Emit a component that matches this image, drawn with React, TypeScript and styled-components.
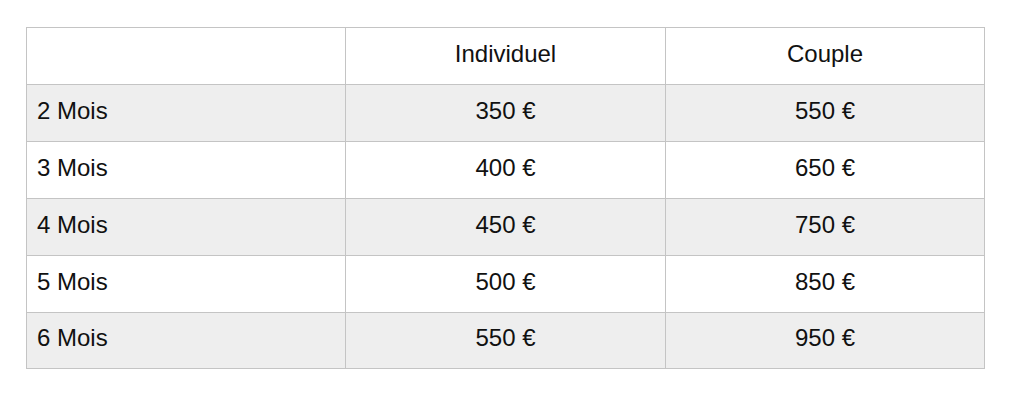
import React from 'react';
import styled, { createGlobalStyle } from 'styled-components';

const GlobalStyle = createGlobalStyle`
  html, body {
    margin: 0;
    padding: 0;
    background: #ffffff;
  }
  body {
    font-family: "Liberation Sans", Arial, Helvetica, sans-serif;
  }
`;

const Page = styled.div`
  padding: 27px 26px;
`;

const Table = styled.div`
  display: grid;
  grid-template-columns: 319px 320px 319px;
  grid-template-rows: repeat(5, 57px) 56px;
  width: 959px;
  border-top: 1px solid #c4c4c4;
  border-left: 1px solid #c4c4c4;
  box-sizing: border-box;
`;

const Row = styled.div<{ $shaded?: boolean }>`
  display: contents;

  & > div {
    background: ${({ $shaded }) => ($shaded ? '#eeeeee' : '#ffffff')};
  }
`;

const Cell = styled.div<{ $align?: 'left' | 'center' }>`
  box-sizing: border-box;
  display: flex;
  align-items: center;
  justify-content: ${({ $align }) => ($align === 'left' ? 'flex-start' : 'center')};
  padding: 0 10px 5px;
  border-right: 1px solid #c4c4c4;
  border-bottom: 1px solid #c4c4c4;
  font-size: 24px;
  color: #111111;
`;

const rows = [
  { label: '2 Mois', single: '350 €', couple: '550 €' },
  { label: '3 Mois', single: '400 €', couple: '650 €' },
  { label: '4 Mois', single: '450 €', couple: '750 €' },
  { label: '5 Mois', single: '500 €', couple: '850 €' },
  { label: '6 Mois', single: '550 €', couple: '950 €' },
];

export default function App() {
  return (
    <>
      <GlobalStyle />
      <Page>
        <Table>
          <Row>
            <Cell $align="left" />
            <Cell>Individuel</Cell>
            <Cell>Couple</Cell>
          </Row>
          {rows.map((r, i) => (
            <Row key={r.label} $shaded={i % 2 === 0}>
              <Cell $align="left">{r.label}</Cell>
              <Cell>{r.single}</Cell>
              <Cell>{r.couple}</Cell>
            </Row>
          ))}
        </Table>
      </Page>
    </>
  );
}
